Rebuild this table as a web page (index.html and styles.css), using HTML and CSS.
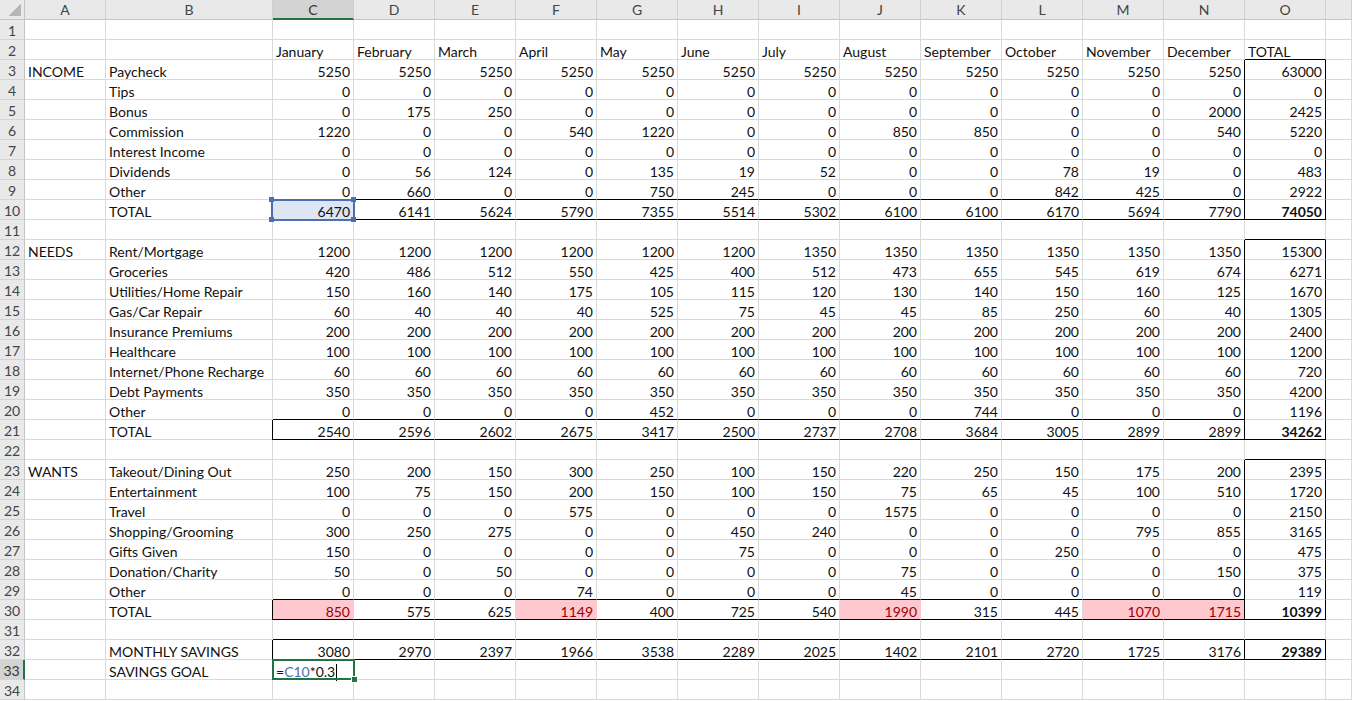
FILE: index.html
```html
<!DOCTYPE html>
<html>
<head>
<meta charset="utf-8">
<title>Budget</title>
<link rel="stylesheet" href="styles.css">
</head>
<body>
<div class="sheet">
<span class="corner"></span><span class="ch">A</span><span class="ch">B</span><span class="ch csel">C</span><span class="ch">D</span><span class="ch">E</span><span class="ch">F</span><span class="ch">G</span><span class="ch">H</span><span class="ch">I</span><span class="ch">J</span><span class="ch">K</span><span class="ch">L</span><span class="ch">M</span><span class="ch">N</span><span class="ch">O</span><span class="ch"></span>

<span class="rh">1</span><span></span><span></span><span></span><span></span><span></span><span></span><span></span><span></span><span></span><span></span><span></span><span></span><span></span><span></span><span></span><span></span>

<span class="rh">2</span><span></span><span></span><span class="t">January</span><span class="t">February</span><span class="t">March</span><span class="t">April</span><span class="t">May</span><span class="t">June</span><span class="t">July</span><span class="t">August</span><span class="t">September</span><span class="t">October</span><span class="t">November</span><span class="t">December</span><span class="t bb">TOTAL</span><span></span>

<span class="rh">3</span><span class="t">INCOME</span><span class="t">Paycheck</span><span>5250</span><span>5250</span><span>5250</span><span>5250</span><span>5250</span><span>5250</span><span>5250</span><span>5250</span><span>5250</span><span>5250</span><span>5250</span><span>5250</span><span class="bx">63000</span><span></span>

<span class="rh">4</span><span></span><span class="t">Tips</span><span>0</span><span>0</span><span>0</span><span>0</span><span>0</span><span>0</span><span>0</span><span>0</span><span>0</span><span>0</span><span>0</span><span>0</span><span class="bx">0</span><span></span>

<span class="rh">5</span><span></span><span class="t">Bonus</span><span>0</span><span>175</span><span>250</span><span>0</span><span>0</span><span>0</span><span>0</span><span>0</span><span>0</span><span>0</span><span>0</span><span>2000</span><span class="bx">2425</span><span></span>

<span class="rh">6</span><span></span><span class="t">Commission</span><span>1220</span><span>0</span><span>0</span><span>540</span><span>1220</span><span>0</span><span>0</span><span>850</span><span>850</span><span>0</span><span>0</span><span>540</span><span class="bx">5220</span><span></span>

<span class="rh">7</span><span></span><span class="t">Interest Income</span><span>0</span><span>0</span><span>0</span><span>0</span><span>0</span><span>0</span><span>0</span><span>0</span><span>0</span><span>0</span><span>0</span><span>0</span><span class="bx">0</span><span></span>

<span class="rh">8</span><span></span><span class="t">Dividends</span><span>0</span><span>56</span><span>124</span><span>0</span><span>135</span><span>19</span><span>52</span><span>0</span><span>0</span><span>78</span><span>19</span><span>0</span><span class="bx">483</span><span></span>

<span class="rh">9</span><span></span><span class="t">Other</span><span class="bb">0</span><span class="bb">660</span><span class="bb">0</span><span class="bb">0</span><span class="bb">750</span><span class="bb">245</span><span class="bb">0</span><span class="bb">0</span><span class="bb">0</span><span class="bb">842</span><span class="bb">425</span><span class="bb">0</span><span class="bx">2922</span><span></span>

<span class="rh">10</span><span></span><span class="t">TOTAL</span><span class="bb bl sel">6470</span><span class="bb">6141</span><span class="bb">5624</span><span class="bb">5790</span><span class="bb">7355</span><span class="bb">5514</span><span class="bb">5302</span><span class="bb">6100</span><span class="bb">6100</span><span class="bb">6170</span><span class="bb">5694</span><span class="bb">7790</span><span class="bx bb b">74050</span><span></span>

<span class="rh">11</span><span></span><span></span><span></span><span></span><span></span><span></span><span></span><span></span><span></span><span></span><span></span><span></span><span></span><span></span><span class="bb"></span><span></span>

<span class="rh">12</span><span class="t">NEEDS</span><span class="t">Rent/Mortgage</span><span>1200</span><span>1200</span><span>1200</span><span>1200</span><span>1200</span><span>1200</span><span>1350</span><span>1350</span><span>1350</span><span>1350</span><span>1350</span><span>1350</span><span class="bx">15300</span><span></span>

<span class="rh">13</span><span></span><span class="t">Groceries</span><span>420</span><span>486</span><span>512</span><span>550</span><span>425</span><span>400</span><span>512</span><span>473</span><span>655</span><span>545</span><span>619</span><span>674</span><span class="bx">6271</span><span></span>

<span class="rh">14</span><span></span><span class="t">Utilities/Home Repair</span><span>150</span><span>160</span><span>140</span><span>175</span><span>105</span><span>115</span><span>120</span><span>130</span><span>140</span><span>150</span><span>160</span><span>125</span><span class="bx">1670</span><span></span>

<span class="rh">15</span><span></span><span class="t">Gas/Car Repair</span><span>60</span><span>40</span><span>40</span><span>40</span><span>525</span><span>75</span><span>45</span><span>45</span><span>85</span><span>250</span><span>60</span><span>40</span><span class="bx">1305</span><span></span>

<span class="rh">16</span><span></span><span class="t">Insurance Premiums</span><span>200</span><span>200</span><span>200</span><span>200</span><span>200</span><span>200</span><span>200</span><span>200</span><span>200</span><span>200</span><span>200</span><span>200</span><span class="bx">2400</span><span></span>

<span class="rh">17</span><span></span><span class="t">Healthcare</span><span>100</span><span>100</span><span>100</span><span>100</span><span>100</span><span>100</span><span>100</span><span>100</span><span>100</span><span>100</span><span>100</span><span>100</span><span class="bx">1200</span><span></span>

<span class="rh">18</span><span></span><span class="t">Internet/Phone Recharge</span><span>60</span><span>60</span><span>60</span><span>60</span><span>60</span><span>60</span><span>60</span><span>60</span><span>60</span><span>60</span><span>60</span><span>60</span><span class="bx">720</span><span></span>

<span class="rh">19</span><span></span><span class="t">Debt Payments</span><span>350</span><span>350</span><span>350</span><span>350</span><span>350</span><span>350</span><span>350</span><span>350</span><span>350</span><span>350</span><span>350</span><span>350</span><span class="bx">4200</span><span></span>

<span class="rh">20</span><span></span><span class="t">Other</span><span class="bb">0</span><span class="bb">0</span><span class="bb">0</span><span class="bb">0</span><span class="bb">452</span><span class="bb">0</span><span class="bb">0</span><span class="bb">0</span><span class="bb">744</span><span class="bb">0</span><span class="bb">0</span><span class="bb">0</span><span class="bx">1196</span><span></span>

<span class="rh">21</span><span></span><span class="t">TOTAL</span><span class="bb bl">2540</span><span class="bb">2596</span><span class="bb">2602</span><span class="bb">2675</span><span class="bb">3417</span><span class="bb">2500</span><span class="bb">2737</span><span class="bb">2708</span><span class="bb">3684</span><span class="bb">3005</span><span class="bb">2899</span><span class="bb">2899</span><span class="bx bb b">34262</span><span></span>

<span class="rh">22</span><span></span><span></span><span></span><span></span><span></span><span></span><span></span><span></span><span></span><span></span><span></span><span></span><span></span><span></span><span class="bb"></span><span></span>

<span class="rh">23</span><span class="t">WANTS</span><span class="t">Takeout/Dining Out</span><span>250</span><span>200</span><span>150</span><span>300</span><span>250</span><span>100</span><span>150</span><span>220</span><span>250</span><span>150</span><span>175</span><span>200</span><span class="bx">2395</span><span></span>

<span class="rh">24</span><span></span><span class="t">Entertainment</span><span>100</span><span>75</span><span>150</span><span>200</span><span>150</span><span>100</span><span>150</span><span>75</span><span>65</span><span>45</span><span>100</span><span>510</span><span class="bx">1720</span><span></span>

<span class="rh">25</span><span></span><span class="t">Travel</span><span>0</span><span>0</span><span>0</span><span>575</span><span>0</span><span>0</span><span>0</span><span>1575</span><span>0</span><span>0</span><span>0</span><span>0</span><span class="bx">2150</span><span></span>

<span class="rh">26</span><span></span><span class="t">Shopping/Grooming</span><span>300</span><span>250</span><span>275</span><span>0</span><span>0</span><span>450</span><span>240</span><span>0</span><span>0</span><span>0</span><span>795</span><span>855</span><span class="bx">3165</span><span></span>

<span class="rh">27</span><span></span><span class="t">Gifts Given</span><span>150</span><span>0</span><span>0</span><span>0</span><span>0</span><span>75</span><span>0</span><span>0</span><span>0</span><span>250</span><span>0</span><span>0</span><span class="bx">475</span><span></span>

<span class="rh">28</span><span></span><span class="t">Donation/Charity</span><span>50</span><span>0</span><span>50</span><span>0</span><span>0</span><span>0</span><span>0</span><span>75</span><span>0</span><span>0</span><span>0</span><span>150</span><span class="bx">375</span><span></span>

<span class="rh">29</span><span></span><span class="t">Other</span><span class="bb">0</span><span class="bb">0</span><span class="bb">0</span><span class="bb">74</span><span class="bb">0</span><span class="bb">0</span><span class="bb">0</span><span class="bb">45</span><span class="bb">0</span><span class="bb">0</span><span class="bb">0</span><span class="bb">0</span><span class="bx">119</span><span></span>

<span class="rh">30</span><span></span><span class="t">TOTAL</span><span class="bb bl p">850</span><span class="bb">575</span><span class="bb">625</span><span class="bb p">1149</span><span class="bb">400</span><span class="bb">725</span><span class="bb">540</span><span class="bb p">1990</span><span class="bb">315</span><span class="bb">445</span><span class="bb p">1070</span><span class="bb p">1715</span><span class="bx bb b">10399</span><span></span>

<span class="rh">31</span><span></span><span></span><span class="bb"></span><span class="bb"></span><span class="bb"></span><span class="bb"></span><span class="bb"></span><span class="bb"></span><span class="bb"></span><span class="bb"></span><span class="bb"></span><span class="bb"></span><span class="bb"></span><span class="bb"></span><span class="bb"></span><span></span>

<span class="rh">32</span><span></span><span class="t">MONTHLY SAVINGS</span><span class="bb bl">3080</span><span class="bb">2970</span><span class="bb">2397</span><span class="bb">1966</span><span class="bb">3538</span><span class="bb">2289</span><span class="bb">2025</span><span class="bb">1402</span><span class="bb">2101</span><span class="bb">2720</span><span class="bb">1725</span><span class="bb">3176</span><span class="bx bb b">29389</span><span></span>

<span class="rh rsel">33</span><span></span><span class="t">SAVINGS GOAL</span><span class="t act">=<span class="ref">C10</span>*0.3<span class="caret"></span></span><span></span><span></span><span></span><span></span><span></span><span></span><span></span><span></span><span></span><span></span><span></span><span></span><span></span>

<span class="rh">34</span><span></span><span></span><span></span><span></span><span></span><span></span><span></span><span></span><span></span><span></span><span></span><span></span><span></span><span></span><span></span><span></span>
</div>
</body>
</html>
```

FILE: styles.css
```css
html, body {
  margin: 0;
  padding: 0;
  background: #ffffff;
}

.sheet {
  display: grid;
  grid-template-columns: 25px 81px 167px repeat(13, 81px) 26px;
  grid-auto-rows: 20px;
  font-family: "Lato", "Liberation Sans", sans-serif;
  font-size: 14px;
  color: #111;
  overflow: hidden;
  width: 1352px;
}

.sheet > span {
  box-sizing: border-box;
  border-right: 1px solid #d9d9d9;
  border-bottom: 1px solid #d9d9d9;
  padding: 0 3px;
  line-height: 23px;
  text-align: right;
  white-space: nowrap;
  overflow: visible;
}

.sheet > .t { text-align: left; }
.sheet > .b { font-weight: 700; }
.sheet > .bb { border-bottom-color: #000; }
.sheet > .bl { box-shadow: -1px 0 0 #000; }
.sheet > .bx { border-right-color: #000; box-shadow: -1px 0 0 #000; }
.sheet > .p { background: #ffc7ce; color: #9c0006; border-right-color: #ffc7ce; }

/* headers */
.sheet > .corner {
  background:
    linear-gradient(135deg, transparent 50%, #b7b7b7 50%) no-repeat right 3px bottom 3px / 13px 13px,
    #e9e9e9;
  border-right-color: #c4c4c4;
  border-bottom-color: #c4c4c4;
}
.sheet > .ch {
  background: #e9e9e9;
  color: #444;
  text-align: center;
  border-right-color: #cfcfcf;
  border-bottom-color: #c4c4c4;
  line-height: 20px;
}
.sheet > .csel {
  background: #d3d3d3;
  border-bottom: 2px solid #217346;
  color: #333;
}
.sheet > .rh {
  background: #e9e9e9;
  color: #444;
  text-align: center;
  padding: 0;
  line-height: 21px;
  border-right-color: #c4c4c4;
  border-bottom-color: #d4d4d4;
}
.sheet > .rsel {
  background: #d3d3d3;
  border-right: 2px solid #217346;
  color: #333;
}

/* formula reference highlight on C10 */
.sheet > .sel {
  position: relative;
  background: #dde6f2;
}
.sel::before {
  content: "";
  position: absolute;
  left: -2px;
  top: -1px;
  right: -2px;
  bottom: -2px;
  border: 2px solid #4d6fae;
}
.sel::after {
  content: "";
  position: absolute;
  left: -4px;
  top: -3px;
  width: 5px;
  height: 5px;
  background: #4d6fae;
  box-shadow: 82px 0 #4d6fae, 0 20px #4d6fae, 82px 20px #4d6fae;
}

/* active cell C33 */
.sheet > .act {
  position: relative;
}
.act::before {
  content: "";
  position: absolute;
  left: -1px;
  top: -1px;
  right: -2px;
  bottom: -1px;
  border: 2px solid #217346;
}
.act::after {
  content: "";
  position: absolute;
  right: -5px;
  bottom: -4px;
  width: 5px;
  height: 5px;
  background: #217346;
  border: 1px solid #fff;
}
.ref { color: #4d6fae; }
.caret {
  display: inline-block;
  width: 1px;
  height: 17px;
  background: #000;
  vertical-align: -4px;
  margin-left: 1px;
}
```
